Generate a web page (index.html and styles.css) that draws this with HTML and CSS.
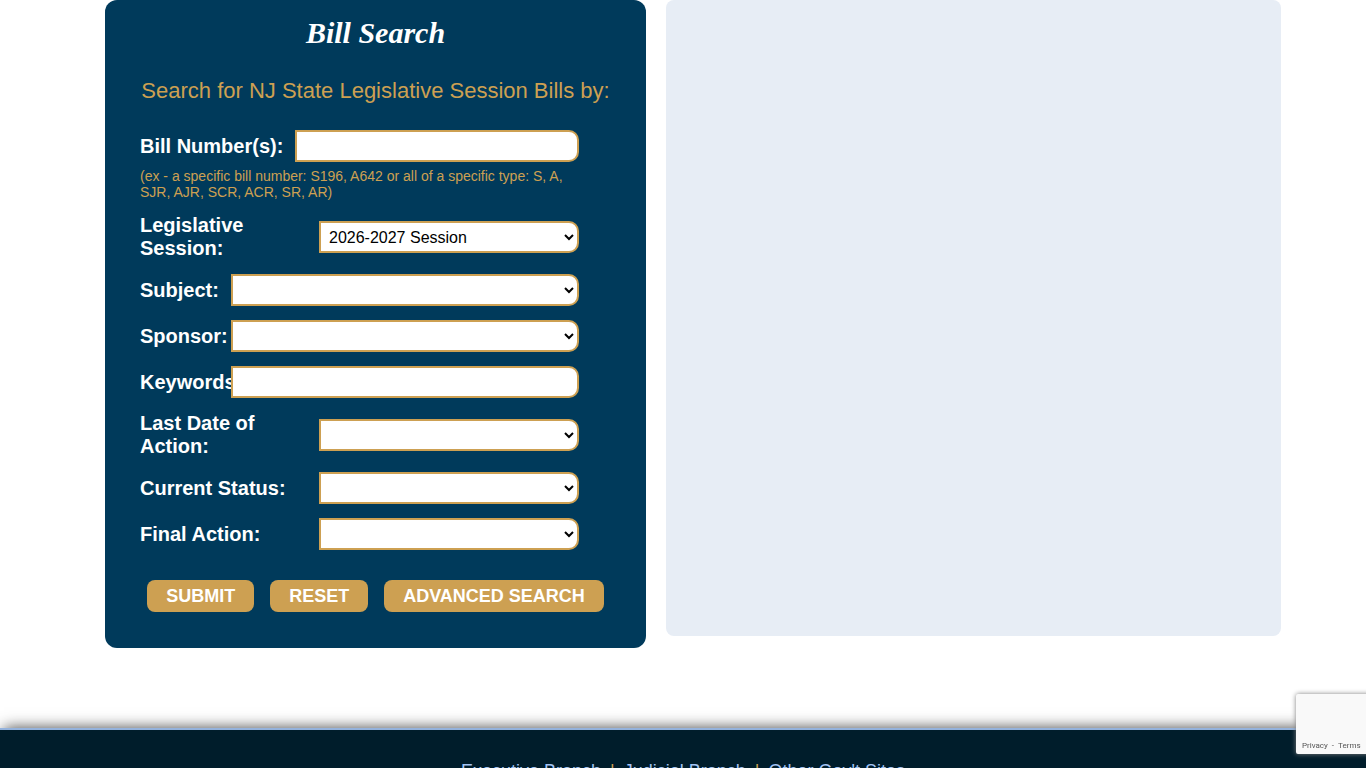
FILE: index.html
```html
<!DOCTYPE html>
<html lang="en">
<head>
<meta charset="utf-8">
<title>Bill Search</title>
<link rel="stylesheet" href="styles.css">
</head>
<body>
<main class="content">
  <section class="search-card">
    <h1 class="title">Bill Search</h1>
    <p class="subtitle">Search for NJ State Legislative Session Bills by:</p>
    <form class="search-form">
      <div class="fields">
        <div class="row row-number">
          <label for="bill">Bill Number(s):</label>
          <input class="control" id="bill" type="text" aria-describedby="bill-hint">
        </div>
        <p class="hint" id="bill-hint">(ex - a specific bill number: S196, A642 or all of a specific type: S, A, SJR, AJR, SCR, ACR, SR, AR)</p>
        <div class="row row-long">
          <label for="session">Legislative<br>Session:</label>
          <select class="control" id="session"><option>2026-2027 Session</option></select>
        </div>
        <div class="row row-short">
          <label for="subject">Subject:</label>
          <select class="control" id="subject"><option></option></select>
        </div>
        <div class="row row-short">
          <label for="sponsor">Sponsor:</label>
          <select class="control" id="sponsor"><option></option></select>
        </div>
        <div class="row row-short">
          <label for="keywords">Keywords:</label>
          <input class="control" id="keywords" type="text">
        </div>
        <div class="row row-long">
          <label for="date">Last Date of<br>Action:</label>
          <select class="control" id="date"><option></option></select>
        </div>
        <div class="row row-long">
          <label for="status">Current Status:</label>
          <select class="control" id="status"><option></option></select>
        </div>
        <div class="row row-long">
          <label for="final">Final Action:</label>
          <select class="control" id="final"><option></option></select>
        </div>
      </div>
      <div class="actions">
        <button class="button" type="submit">SUBMIT</button>
        <button class="button" type="reset">RESET</button>
        <button class="button" type="button">ADVANCED SEARCH</button>
      </div>
    </form>
  </section>
  <section class="results" aria-label="Results"></section>
</main>
<footer class="footer">
  <nav class="footer-links">
    <a href="#">Executive Branch</a>
    <span class="divider">|</span>
    <a href="#">Judicial Branch</a>
    <span class="divider">|</span>
    <a href="#">Other Gov't Sites</a>
  </nav>
</footer>
<aside class="badge">
  <div class="badge-links"><a href="#">Privacy</a><span>-</span><a href="#">Terms</a></div>
</aside>
</body>
</html>
```

FILE: styles.css
```css
* {
  box-sizing: border-box;
}

body {
  margin: 0;
  background: #fff;
  font-family: "Liberation Sans", Arial, sans-serif;
}

.content {
  display: grid;
  grid-template-columns: 541fr 615fr;
  gap: 20px;
  align-items: start;
  padding: 0 85px 80px 105px;
}

.search-card {
  padding: 16px 0 36px;
  border-radius: 12px;
  background: #003a5b;
  color: #fff;
}

.title {
  margin: 0;
  font: italic bold 30px/34px "Liberation Serif", "Times New Roman", serif;
  text-align: center;
}

.subtitle {
  margin: 28px 0 27px;
  color: #cda052;
  font-size: 22px;
  line-height: 25px;
  text-align: center;
}

.fields {
  display: flex;
  flex-direction: column;
  gap: 14px;
  padding: 0 67px 0 35px;
}

.row {
  display: grid;
  align-items: center;
  font-size: 20px;
  font-weight: bold;
  line-height: 23px;
  white-space: nowrap;
}

.row-number {
  grid-template-columns: 155px 1fr;
}

.row-long {
  grid-template-columns: 179px 1fr;
}

.row-short {
  grid-template-columns: 91px 1fr;
}

.control {
  width: 100%;
  min-width: 0;
  height: 32px;
  padding: 4px;
  border: 2px solid #cda052;
  border-radius: 0 10px 10px 0;
  background-color: #fff;
  color: #000;
  font: 16px "Liberation Sans", Arial, sans-serif;
}

.hint {
  margin: -8px 0 0;
  color: #cda052;
  font-size: 14px;
  line-height: 16px;
}

.actions {
  display: flex;
  justify-content: center;
  gap: 16px;
  margin-top: 30px;
}

.button {
  height: 32px;
  padding: 0 19px;
  border: 0;
  border-radius: 8px;
  background: #cda052;
  color: #fff;
  font: bold 18px "Liberation Sans", Arial, sans-serif;
}

.results {
  min-height: 636px;
  border-radius: 8px;
  background: #e7edf5;
}

.footer {
  min-height: 120px;
  padding-top: 31px;
  border-top: 2px solid #94b2dc;
  background: #001d2b;
  box-shadow: 4px 0 14px #444;
}

.footer-links {
  display: flex;
  justify-content: center;
  gap: 9px;
  color: #cda052;
  font-size: 18px;
  line-height: 20px;
}

.footer-links a {
  color: #a4c4f4;
  text-decoration: none;
}

.badge {
  position: fixed;
  right: -186px;
  bottom: 14px;
  width: 256px;
  height: 60px;
  display: flex;
  align-items: flex-end;
  padding: 0 0 3px 6px;
  border-radius: 2px;
  background: #f9f9f9;
  box-shadow: 0 0 5px #808080;
}

.badge-links {
  display: flex;
  gap: 4px;
  color: #555;
  font: 8px/10px Roboto, sans-serif;
}

.badge-links a {
  color: inherit;
  text-decoration: none;
}
```
